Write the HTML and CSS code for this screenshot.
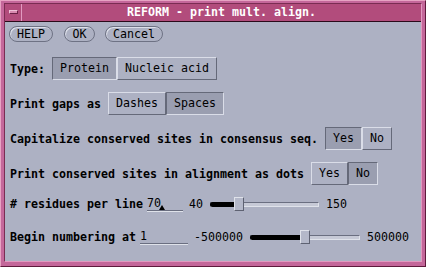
FILE: index.html
```html
<!DOCTYPE html>
<html lang="en">
<head>
  <meta charset="UTF-8">
  <title>REFORM - print mult. align.</title>
  <link rel="stylesheet" href="styles.css">
</head>
<body>
  <div class="window">
    <div class="frame">
      <div class="titlebar">
        <div class="menu-btn"><span class="menu-bar"></span></div>
        <div class="title">REFORM - print mult. align.</div>
      </div>

      <div class="content">
        <div class="actions">
          <button class="pill pill-help">HELP</button>
          <button class="pill pill-ok">OK</button>
          <button class="pill pill-cancel">Cancel</button>
        </div>

        <div class="row row-first">
          <span class="label">Type:</span>
          <div class="toggle">
            <span class="opt on">Protein</span>
            <span class="opt">Nucleic acid</span>
          </div>
        </div>

        <div class="row">
          <span class="label">Print gaps as</span>
          <div class="toggle">
            <span class="opt">Dashes</span>
            <span class="opt on">Spaces</span>
          </div>
        </div>

        <div class="row">
          <span class="label">Capitalize conserved sites in consensus seq.</span>
          <div class="toggle">
            <span class="opt on">Yes</span>
            <span class="opt">No</span>
          </div>
        </div>

        <div class="row">
          <span class="label">Print conserved sites in alignment as dots</span>
          <div class="toggle">
            <span class="opt">Yes</span>
            <span class="opt on">No</span>
          </div>
        </div>

        <div class="slider-row slider-row-first">
          <span class="label">#&nbsp;residues per line</span>
          <div class="field field-short">70<span class="caret"></span></div>
          <span class="num num-min">40</span>
          <div class="slider slider-short">
            <div class="fill" style="width: 26%"><span class="thumb"></span></div>
          </div>
          <span class="num">150</span>
        </div>

        <div class="slider-row slider-row-second">
          <span class="label">Begin numbering at</span>
          <div class="field field-long">1</div>
          <span class="num num-min">-500000</span>
          <div class="slider slider-long">
            <div class="fill" style="width: 50%"><span class="thumb"></span></div>
          </div>
          <span class="num">500000</span>
        </div>
      </div>
    </div>
  </div>
</body>
</html>
```

FILE: styles.css
```css
* {
  box-sizing: border-box;
}

body {
  margin: 0;
  font-family: "DejaVu Sans Mono", "Liberation Mono", monospace;
  font-size: 11.63px;
  color: #000;
}

.window {
  width: 426px;
  height: 267px;
  background-color: #c4679a;
  border: 1px solid;
  border-color: #e7a3c3 #5e1a3c #5e1a3c #e7a3c3;
  padding: 2px 3px 4px 3px;
}

.frame {
  border: 1px solid;
  border-color: #7a2c52 #e29ac0 #e29ac0 #7a2c52;
  height: 100%;
  display: flex;
  flex-direction: column;
}

.titlebar {
  display: flex;
  height: 18px;
  background-color: #b24c7c;
  border-bottom: 1px solid #2a0a1a;
}

.menu-btn {
  width: 17px;
  height: 17px;
  border-right: 1px solid #e29ac0;
  display: flex;
  align-items: center;
  justify-content: center;
}

.menu-bar {
  width: 9px;
  height: 4px;
  background-color: #d88ab0;
  border: 1px solid;
  border-color: #f0c0d8 #6a2046 #6a2046 #f0c0d8;
  margin-top: -1px;
}

.title {
  flex: 1;
  text-align: center;
  color: #fff;
  font-weight: bold;
  line-height: 17px;
}

.content {
  flex: 1;
  background-color: #adb1c3;
  padding: 0 5px;
}

.actions {
  display: flex;
  margin: 4px 0 0 -1px;
}

.pill {
  font: inherit;
  color: #000;
  height: 16px;
  padding: 0;
  line-height: 14px;
  background-color: #adb1c3;
  border: 1px solid #6e7284;
  border-radius: 8px;
  box-shadow: inset 1px 1px 0 #dde0ea;
  text-align: center;
}

.pill-help {
  width: 44px;
}

.pill-ok {
  width: 31px;
  margin-left: 11px;
}

.pill-cancel {
  width: 58px;
  margin-left: 10px;
}

.row {
  display: flex;
  align-items: center;
  height: 23px;
  margin-top: 12px;
}

.row-first {
  margin-top: 15px;
}

.label {
  font-weight: bold;
  white-space: pre;
  margin-right: 7px;
}

.toggle {
  display: flex;
  height: 23px;
}

.opt {
  padding: 0 7px;
  line-height: 21px;
  border: 1px solid;
  border-color: #dadde8 #656979 #656979 #dadde8;
  background-color: #adb1c3;
}

.opt.on {
  background-color: #9a9eb0;
  border-color: #656979 #dadde8 #dadde8 #656979;
}

.slider-row {
  display: flex;
  align-items: center;
  height: 16px;
}

.slider-row-first {
  margin-top: 11px;
}

.slider-row-second {
  margin-top: 17px;
}

.slider-row .label {
  margin-right: 4px;
}

.field {
  position: relative;
  height: 16px;
  line-height: 14px;
  border-bottom: 1px solid #dfe2ea;
  box-shadow: inset 0 -1px 0 #6a6e80;
}

.field-short {
  width: 36px;
}

.field-long {
  width: 48px;
}

.caret {
  position: absolute;
  left: 12px;
  bottom: 1px;
  width: 0;
  height: 0;
  border-left: 3px solid transparent;
  border-right: 3px solid transparent;
  border-bottom: 5px solid #000;
}

.num-min {
  margin-left: 6px;
}

.slider {
  position: relative;
  height: 5px;
  margin: 0 7px;
  background-color: #c6c9d6;
  border: 1px solid;
  border-color: #6a6e80 #dfe2ea #dfe2ea #6a6e80;
}

.slider-short {
  width: 109px;
}

.slider-long {
  width: 110px;
  margin-left: 7px;
}

.fill {
  position: absolute;
  left: -1px;
  top: -1px;
  height: 5px;
  background-color: #000;
  border-radius: 3px 0 0 3px;
}

.thumb {
  position: absolute;
  right: -6px;
  top: -5px;
  width: 10px;
  height: 14px;
  background-color: #b4b8c9;
  border: 1px solid;
  border-color: #dfe2ea #5e6272 #5e6272 #dfe2ea;
}
```
